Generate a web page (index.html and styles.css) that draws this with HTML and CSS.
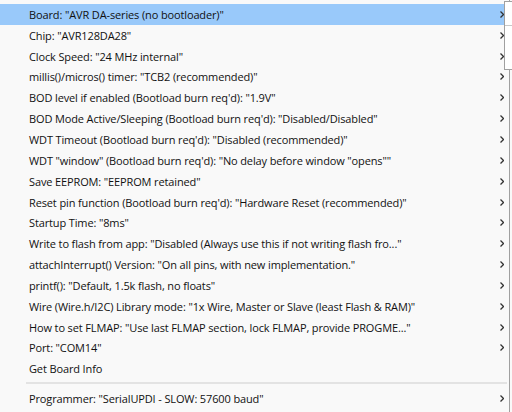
FILE: index.html
```html
<!DOCTYPE html>
<html>
<head>
<meta charset="utf-8">
<link rel="stylesheet" href="styles.css">
</head>
<body>
<div class="menu">
  <ul class="items">
    <li class="item selected"><span class="label">Board: "AVR DA-series (no bootloader)"</span><svg class="chev" viewBox="0 0 4 7"><path d="M0.5 0.5 L3.5 3.5 L0.5 6.5"/></svg></li>
    <li class="item"><span class="label">Chip: "AVR128DA28"</span><svg class="chev" viewBox="0 0 4 7"><path d="M0.5 0.5 L3.5 3.5 L0.5 6.5"/></svg></li>
    <li class="item"><span class="label">Clock Speed: "24 MHz internal"</span><svg class="chev" viewBox="0 0 4 7"><path d="M0.5 0.5 L3.5 3.5 L0.5 6.5"/></svg></li>
    <li class="item"><span class="label">millis()/micros() timer: "TCB2 (recommended)"</span><svg class="chev" viewBox="0 0 4 7"><path d="M0.5 0.5 L3.5 3.5 L0.5 6.5"/></svg></li>
    <li class="item"><span class="label">BOD level if enabled (Bootload burn req'd): "1.9V"</span><svg class="chev" viewBox="0 0 4 7"><path d="M0.5 0.5 L3.5 3.5 L0.5 6.5"/></svg></li>
    <li class="item"><span class="label">BOD Mode Active/Sleeping (Bootload burn req'd): "Disabled/Disabled"</span><svg class="chev" viewBox="0 0 4 7"><path d="M0.5 0.5 L3.5 3.5 L0.5 6.5"/></svg></li>
    <li class="item"><span class="label">WDT Timeout (Bootload burn req'd): "Disabled (recommended)"</span><svg class="chev" viewBox="0 0 4 7"><path d="M0.5 0.5 L3.5 3.5 L0.5 6.5"/></svg></li>
    <li class="item"><span class="label">WDT "window" (Bootload burn req'd): "No delay before window "opens""</span><svg class="chev" viewBox="0 0 4 7"><path d="M0.5 0.5 L3.5 3.5 L0.5 6.5"/></svg></li>
    <li class="item"><span class="label">Save EEPROM: "EEPROM retained"</span><svg class="chev" viewBox="0 0 4 7"><path d="M0.5 0.5 L3.5 3.5 L0.5 6.5"/></svg></li>
    <li class="item"><span class="label">Reset pin function (Bootload burn req'd): "Hardware Reset (recommended)"</span><svg class="chev" viewBox="0 0 4 7"><path d="M0.5 0.5 L3.5 3.5 L0.5 6.5"/></svg></li>
    <li class="item"><span class="label">Startup Time: "8ms"</span><svg class="chev" viewBox="0 0 4 7"><path d="M0.5 0.5 L3.5 3.5 L0.5 6.5"/></svg></li>
    <li class="item"><span class="label">Write to flash from app: "Disabled (Always use this if not writing flash fro..."</span><svg class="chev" viewBox="0 0 4 7"><path d="M0.5 0.5 L3.5 3.5 L0.5 6.5"/></svg></li>
    <li class="item"><span class="label">attachInterrupt() Version: "On all pins, with new implementation."</span><svg class="chev" viewBox="0 0 4 7"><path d="M0.5 0.5 L3.5 3.5 L0.5 6.5"/></svg></li>
    <li class="item"><span class="label">printf(): "Default, 1.5k flash, no floats"</span><svg class="chev" viewBox="0 0 4 7"><path d="M0.5 0.5 L3.5 3.5 L0.5 6.5"/></svg></li>
    <li class="item"><span class="label">Wire (Wire.h/I2C) Library mode: "1x Wire, Master or Slave (least Flash &amp; RAM)"</span><svg class="chev" viewBox="0 0 4 7"><path d="M0.5 0.5 L3.5 3.5 L0.5 6.5"/></svg></li>
    <li class="item"><span class="label">How to set FLMAP: "Use last FLMAP section, lock FLMAP, provide PROGME..."</span><svg class="chev" viewBox="0 0 4 7"><path d="M0.5 0.5 L3.5 3.5 L0.5 6.5"/></svg></li>
    <li class="item"><span class="label">Port: "COM14"</span><svg class="chev" viewBox="0 0 4 7"><path d="M0.5 0.5 L3.5 3.5 L0.5 6.5"/></svg></li>
    <li class="item"><span class="label">Get Board Info</span></li>
  </ul>
  <div class="sep"></div>
  <ul class="items">
    <li class="item"><span class="label">Programmer: "SerialUPDI - SLOW: 57600 baud"</span><svg class="chev" viewBox="0 0 4 7"><path d="M0.5 0.5 L3.5 3.5 L0.5 6.5"/></svg></li>
  </ul>
</div>
<div class="submenu"><div class="sub-first"></div></div>
</body>
</html>
```

FILE: styles.css
```css
html, body {
  margin: 0;
  padding: 0;
  background: #f9f9f9;
  overflow: hidden;
}

.menu {
  width: 509px;
  height: 408px;
  border-right: 1px solid #a0a0a0;
  background: #f9f9f9;
  padding-top: 4px;
  box-sizing: content-box;
  font-family: "Open Sans", "Noto Sans", sans-serif;
  font-size: 11px;
  color: #111;
}

.items {
  list-style: none;
  margin: 0;
  padding: 0;
}

.item {
  height: 20.85px;
  display: flex;
  align-items: center;
  justify-content: space-between;
  padding: 0 5px 0 29px;
  white-space: nowrap;
}

.item.selected {
  background: #99c9fa;
}

.label {
  letter-spacing: -0.13px;
}

.chev {
  width: 4px;
  height: 7px;
  flex: none;
}

.chev path {
  fill: none;
  stroke: #333;
  stroke-width: 1.3;
}

.sep {
  height: 2px;
  margin: 2.7px 2px 4.6px 26px;
  background: #e3e3e3;
}

.submenu {
  position: absolute;
  left: 504px;
  top: 1px;
  width: 7px;
  height: 67px;
  background: #fff;
  border: 1px solid #a0a0a0;
  border-right: none;
}

.sub-first {
  height: 23px;
  border-bottom: 1px solid #c8c8c8;
}
```
